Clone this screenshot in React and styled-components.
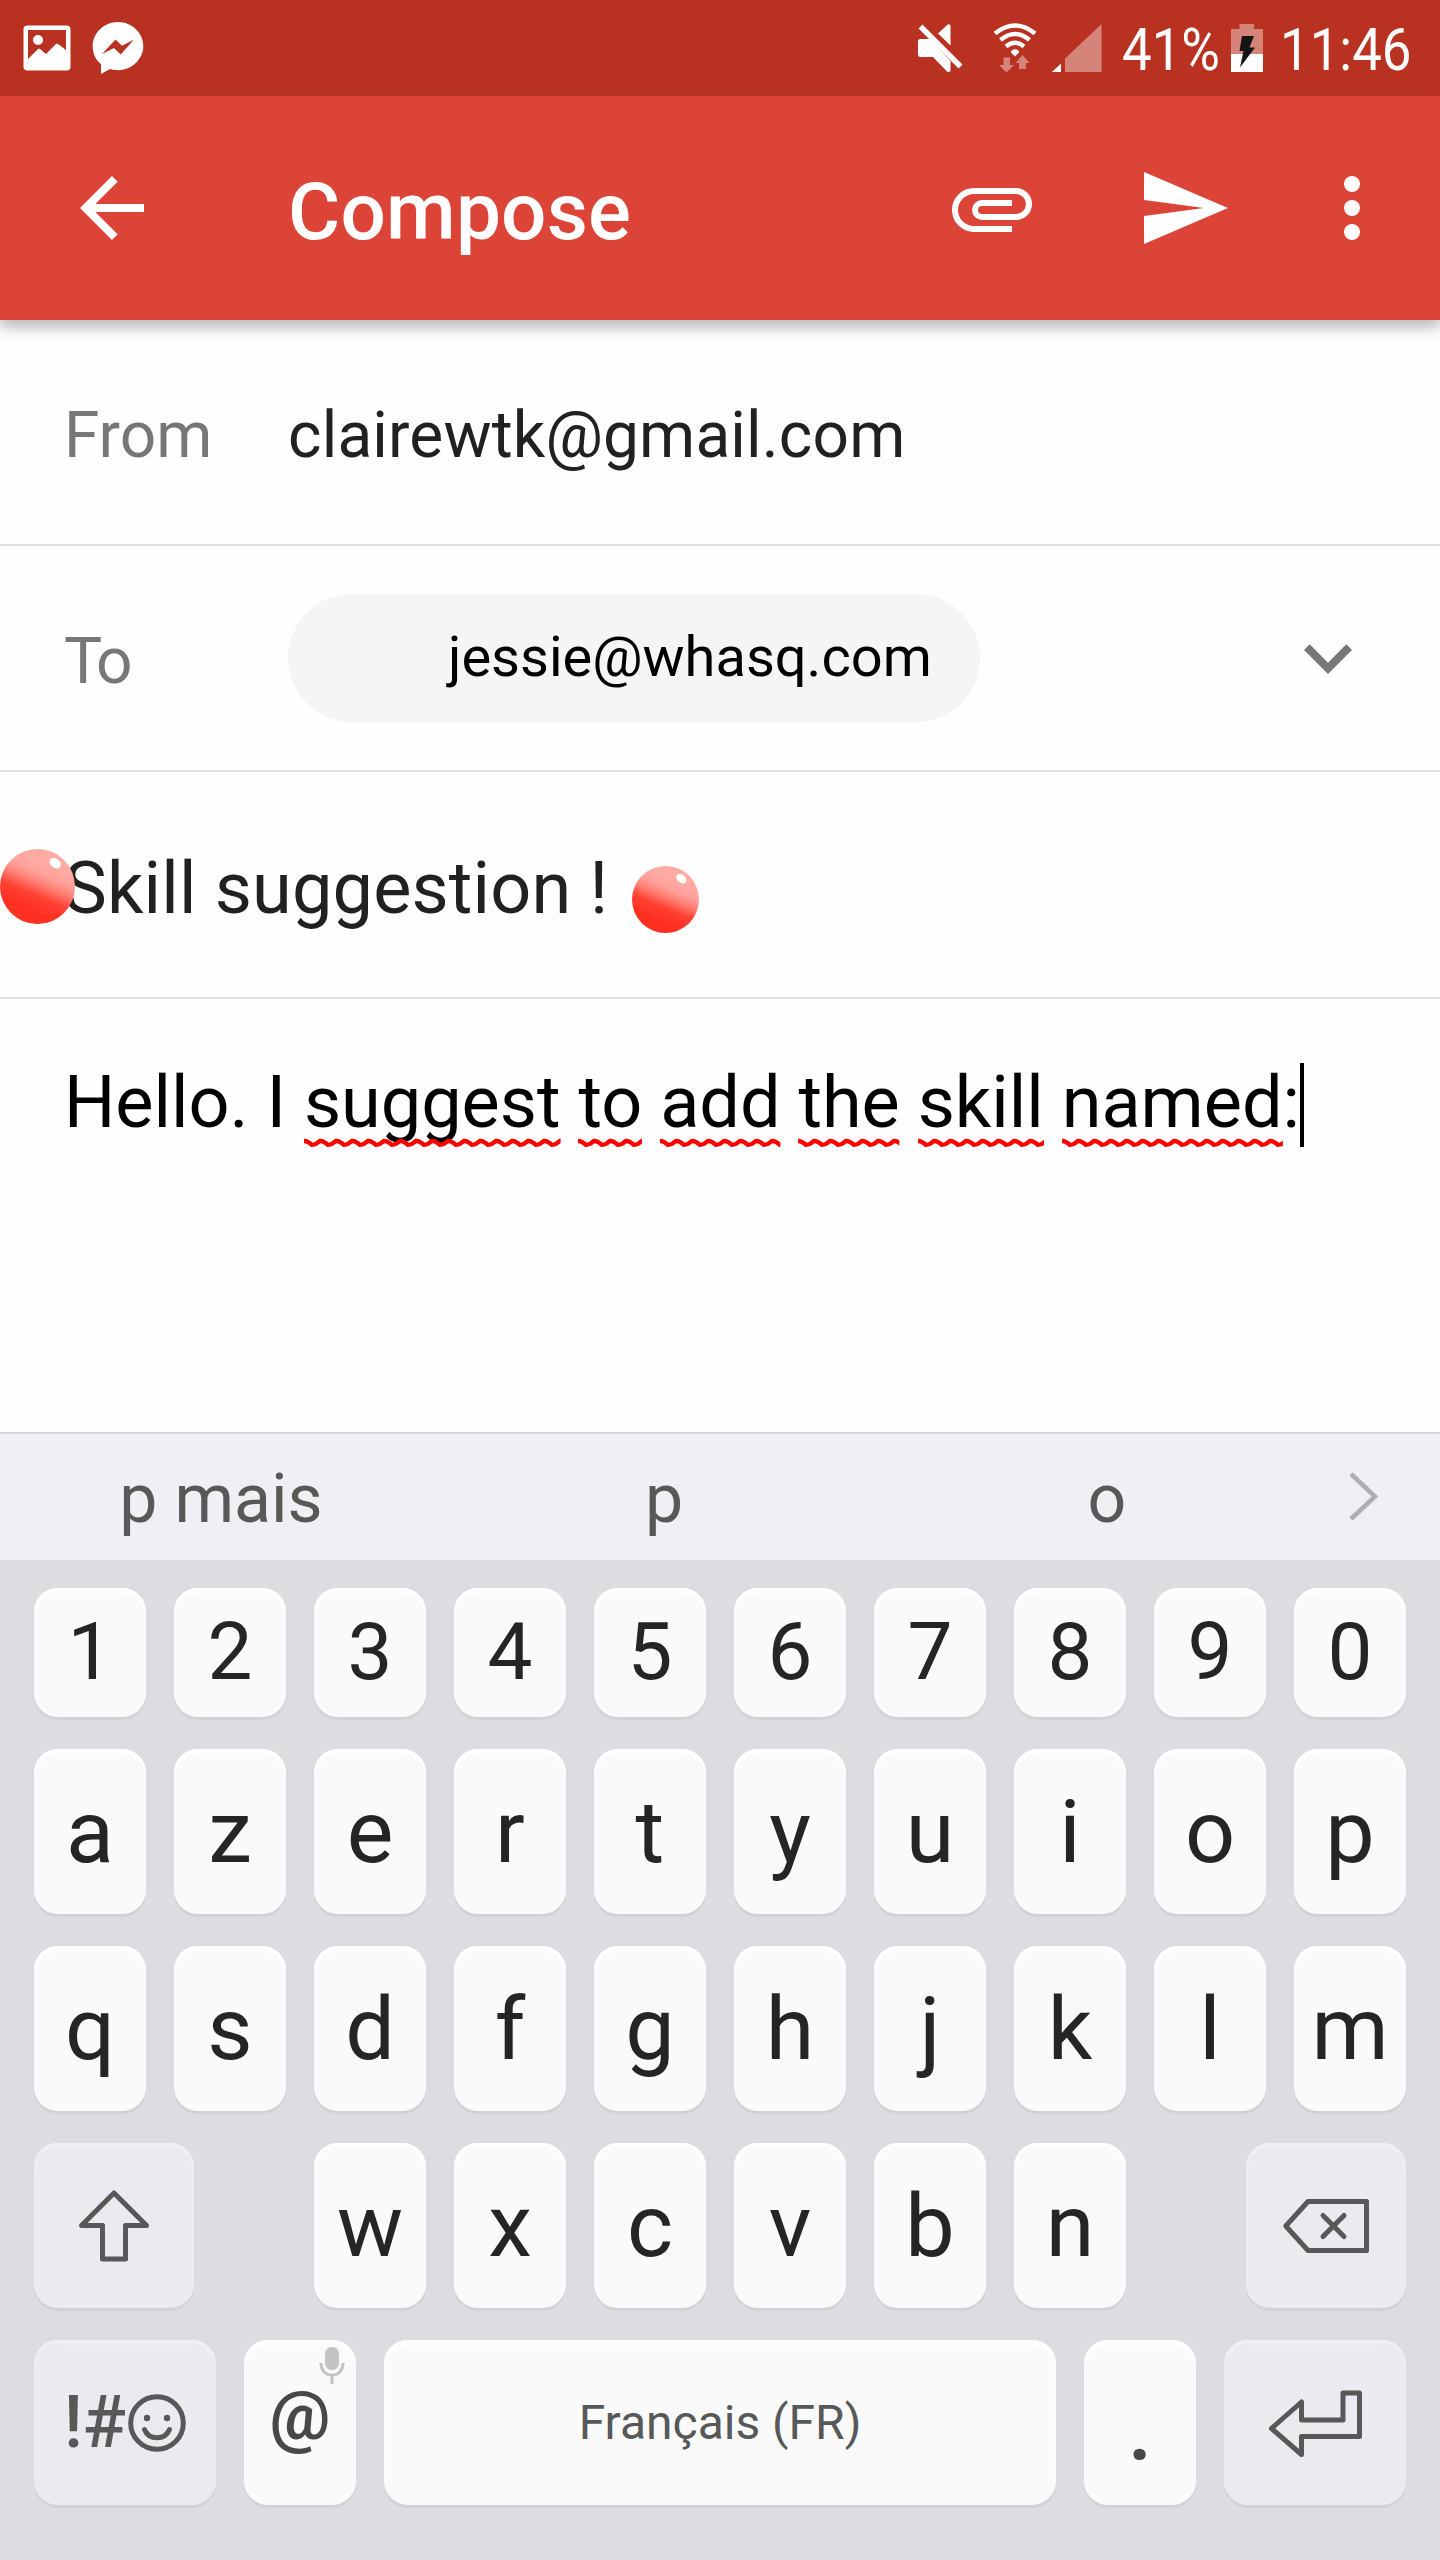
import React from "react";
import styled, { createGlobalStyle } from "styled-components";

const GlobalStyle = createGlobalStyle`
  * { box-sizing: border-box; }
  body { margin: 0; background: #fff; font-family: Roboto, "Liberation Sans", sans-serif; }
  svg { display: block; flex: none; }
`;

const Screen = styled.div`
  width: 1440px;
  height: 2560px;
  display: flex;
  flex-direction: column;
  overflow: hidden;
  background: #fefefe;
`;

const StatusBar = styled.header`
  height: 96px;
  flex: none;
  display: flex;
  align-items: center;
  padding: 0 28px 0 23px;
  background: #b93221;
  color: #fff;
`;

const Spacer = styled.div`
  flex: 1;
`;

const StatusText = styled.span`
  width: ${(p) => p.$width}px;
  margin-left: ${(p) => p.$gap}px;
  padding-top: 4px;
  font-size: 60px;
  line-height: 80px;
  white-space: nowrap;
  transform: scaleX(0.88);
  transform-origin: left center;
`;

const AppBar = styled.nav`
  position: relative;
  z-index: 1;
  height: 224px;
  flex: none;
  display: flex;
  align-items: center;
  padding: 0 40px 0 64px;
  background: #dc4438;
  color: #fff;
  box-shadow: 0 8px 12px rgba(0, 0, 0, 0.26);
`;

const Title = styled.h1`
  flex: 1;
  margin: 0 0 0 128px;
  padding-top: 7px;
  font-size: 80px;
  line-height: 94px;
  font-weight: 500;
  letter-spacing: 0.2px;
`;

const Actions = styled.div`
  display: flex;
`;

const IconBox = styled.div`
  margin-left: ${(p) => p.$gap || 0}px;
`;

const Row = styled.section`
  position: relative;
  height: ${(p) => p.$height}px;
  flex: none;
  display: flex;
  align-items: center;
  padding: 0 64px;
  border-bottom: 2px solid #e0e0e0;
`;

const Label = styled.span`
  width: 224px;
  padding-top: 6px;
  font-size: 64px;
  letter-spacing: ${(p) => p.$tracking || 0}px;
  color: #777;
`;

const Address = styled.span`
  padding-top: 6px;
  font-size: 64px;
  letter-spacing: 0.16px;
  color: #212121;
`;

const Chip = styled.div`
  width: 692px;
  height: 128px;
  display: flex;
  align-items: center;
  padding: 0 0 3px 160px;
  border-radius: 64px;
  background: #f5f5f5;
  font-size: 56px;
  color: #000;
`;

const Subject = styled.span`
  padding-top: 8px;
  font-size: 72px;
  letter-spacing: 0.18px;
  color: #212121;
`;

const LeadBall = styled.div`
  position: absolute;
  left: 0;
  top: 77px;
`;

const TrailBall = styled.div`
  margin: 30px 0 0 24px;
`;

const Body = styled.main`
  flex: 1;
  padding: 62px 64px 0;
  font-size: 72px;
  line-height: 84px;
  color: #000;
  white-space: nowrap;
`;

const Flagged = styled.span`
  position: relative;
  display: inline-block;
`;

const Wave = styled.svg`
  position: absolute;
  left: 0;
  top: 77px;
  width: 100%;
  height: 10px;
  overflow: hidden;
`;

const Caret = styled.span`
  display: inline-block;
  width: 4px;
  height: 84px;
  vertical-align: -20px;
  background: #000;
`;

const Suggestions = styled.div`
  height: 128px;
  flex: none;
  display: flex;
  align-items: center;
  border-top: 2px solid #d6d7d8;
  background: #eff0f3;
  color: #575858;
`;

const Suggestion = styled.span`
  width: 443px;
  padding: 3px 1px 0 0;
  text-align: center;
  font-size: 68px;
`;

const Keyboard = styled.div`
  height: 1000px;
  flex: none;
  display: flex;
  flex-direction: column;
  gap: 32px;
  padding: 27px 34px 0;
  background: #dcdde1;
  border-top: 1px solid #d8dad9;
`;

const KeyRow = styled.div`
  display: flex;
  gap: 28px;
  height: ${(p) => p.$height || 165}px;
`;

const Key = styled.div`
  position: relative;
  width: ${(p) => p.$width || 112}px;
  margin-left: ${(p) => p.$indent || 0}px;
  display: flex;
  align-items: center;
  justify-content: center;
  padding-top: ${(p) => p.$drop || 0}px;
  padding-bottom: ${(p) => p.$lift || 0}px;
  border-radius: 24px;
  background: ${(p) => (p.$fn ? "#e9ebee" : "#fafafa")};
  box-shadow: 0 3px 1px #d1d2d6, inset 0 4px 3px ${(p) => (p.$fn ? "#f0f1f3" : "#fff")};
  font-size: ${(p) => p.$size || 88}px;
  font-weight: ${(p) => p.$weight || 400};
  line-height: 1;
  color: ${(p) => p.$color || "#252525"};
`;

const MicHint = styled.div`
  position: absolute;
  left: 75px;
  top: 6px;
`;

const Ball = ({ size, id }) => (
  <svg width={size} height={size} viewBox="0 0 74 74">
    <defs>
      <linearGradient id={id} x1="0.64" y1="0.18" x2="0.38" y2="0.8">
        <stop offset="0" stopColor="#ffaba4" />
        <stop offset="0.25" stopColor="#ffa19a" />
        <stop offset="0.45" stopColor="#ff7f74" />
        <stop offset="0.7" stopColor="#ff4032" />
        <stop offset="1" stopColor="#ff3022" />
      </linearGradient>
    </defs>
    <circle cx="37" cy="37" r="37" fill={`url(#${id})`} />
    <ellipse cx="54.5" cy="14" rx="6.2" ry="4.4" transform="rotate(38 54.5 14)" fill="#fff" />
  </svg>
);

const Misspelled = ({ children, id }) => (
  <Flagged>
    {children}
    <Wave>
      <defs>
        <pattern id={id} width="16" height="10" patternUnits="userSpaceOnUse">
          <path d="M-8 7 Q-4 7 0 2.800 Q4 2.800 8 7 Q12 7 16 2.800 Q20 2.800 24 7" fill="none" stroke="red" strokeWidth="4.200" />
        </pattern>
      </defs>
      <rect width="100%" height="10" fill={`url(#${id})`} />
    </Wave>
  </Flagged>
);

const WORDS = ["suggest", "to", "add", "the", "skill", "named"];

const Letters = ({ chars, first = 0 }) =>
  chars.split("").map((c, i) => (
    <Key key={c} $indent={i === 0 ? first : 0}>
      {c}
    </Key>
  ));

const line = { fill: "none", stroke: "#575858", strokeWidth: 5, strokeLinejoin: "round", strokeLinecap: "round" };

export default function App() {
  return (
    <Screen>
      <GlobalStyle />
      <StatusBar>
        <svg width="48" height="46" viewBox="0 0 48 46">
          <rect x="0.5" y="0.5" width="47" height="45" rx="4" fill="#fff" />
          <path d="M5 5h38v20l-8-6q-1-1-2 0l-10 10-6-5q-1-1-2 0L5 34z" fill="#b93221" />
          <circle cx="15" cy="15" r="5" fill="#fff" />
        </svg>
        <IconBox $gap={21}>
          <svg width="52" height="54" viewBox="0 0 52 54">
            <path d="M26 1C12 1 .7 12 .7 25c0 8 3.300 14 8.300 18v10l9-5c2.500.8 5 1.200 8 1.200C40 49.200 51.300 38 51.300 25S40 1 26 1z" fill="#fff" />
            <path d="M10 33l13.500-14.500 6.500 6.200 12-6.200-13.300 15-6.700-6.500z" fill="#b93221" />
          </svg>
        </IconBox>
        <Spacer />
        <svg width="46" height="48" viewBox="0 0 46 48">
          <path d="M0 17.500q0-2.500 2.500-2.500H12L32.500 37V46q0 3-3.500 1.500L15 33H2.500Q0 33 0 30.500z" fill="#fff" />
          <path d="M20 9.500L29.500 .8q2.200-1.500 3 1V21.500z" fill="#fff" />
          <path d="M6 -1L48 41" stroke="#b93221" strokeWidth="4" />
          <path d="M2.500 2.500L42.500 42.500" stroke="#fff" strokeWidth="5.500" />
        </svg>
        <IconBox $gap={29}>
          <svg width="44" height="50" viewBox="0 0 44 50">
            <g fill="none" stroke="#fff" strokeWidth="4.400">
              <path d="M2 10.500Q22-5.500 42 10.500" />
              <path d="M7.500 17Q22 5 36.500 17" />
              <path d="M13 23.500Q22 16 31 23.500" />
            </g>
            <path d="M18 28q4-3.300 8 0v1.500L22 33.500l-4-4z" fill="#fff" />
            <path d="M10.500 34.500h6.500v7.500h4l-7.500 7.500-7.500-7.500h4.500zM26 46v-6h-3.500l7-8 7 8H33v6z" fill="#d5847a" />
          </svg>
        </IconBox>
        <IconBox $gap={15}>
          <svg width="50" height="48" viewBox="0 0 50 48">
            <path d="M0 48l9-8.500V48z" fill="#fff" />
            <path d="M13 48V34.500L49.500 0v48z" fill="#d5847a" />
          </svg>
        </IconBox>
        <StatusText $gap={20} $width={100}>41%</StatusText>
        <IconBox $gap={9}>
          <svg width="32" height="48" viewBox="0 0 32 48">
            <path d="M8.500 0H23v5h9v25H0V5h8.500z" fill="#d5847a" />
            <path d="M0 30h32v18H0z" fill="#fff" />
            <path d="M11 12h12l-4.500 11.500H24L9 43.500l3.500-16.500H8.500z" fill="#151515" />
          </svg>
        </IconBox>
        <StatusText $gap={17} $width={132}>11:46</StatusText>
      </StatusBar>

      <AppBar>
        <svg width="96" height="96" viewBox="0 0 24 24" fill="#fff">
          <path d="M20 11H7.830l5.590-5.590L12 4l-8 8 8 8 1.410-1.410L7.830 13H20v-2z" />
        </svg>
        <Title>Compose</Title>
        <Actions>
          <svg width="96" height="96" viewBox="0 0 96 96">
            <path d="M68 69H30a19 19 0 0 1 0-38H72a13 13 0 0 1 0 26H38a7 7 0 0 1 0-14H68" fill="none" stroke="#fff" strokeWidth="6" />
          </svg>
          <IconBox $gap={96}>
            <svg width="96" height="96" viewBox="0 0 24 24" fill="#fff">
              <path d="M2.010 21L23 12 2.010 3 2 10l15 2-15 2z" />
            </svg>
          </IconBox>
          <IconBox $gap={72}>
            <svg width="96" height="96" viewBox="0 0 24 24" fill="#fff">
              <circle cx="12" cy="6" r="2" />
              <circle cx="12" cy="12" r="2" />
              <circle cx="12" cy="18" r="2" />
            </svg>
          </IconBox>
        </Actions>
      </AppBar>

      <Row $height={226}>
        <Label>From</Label>
        <Address>clairewtk@gmail.com</Address>
      </Row>
      <Row $height={226}>
        <Label $tracking={-3}>To</Label>
        <Chip>jessie@whasq.com</Chip>
        <Spacer />
        <svg width="96" height="96" viewBox="0 0 24 24" fill="#777">
          <path d="M16.590 8.590L12 13.170 7.410 8.590 6 10l6 6 6-6z" />
        </svg>
      </Row>
      <Row $height={227}>
        <Subject>Skill suggestion !</Subject>
        <LeadBall>
          <Ball size={75} id="ball-lead" />
        </LeadBall>
        <TrailBall>
          <Ball size={67} id="ball-trail" />
        </TrailBall>
      </Row>
      <Body>
        Hello. I{" "}
        {WORDS.map((w, i) => (
          <React.Fragment key={w}>
            {i > 0 && " "}
            <Misspelled id={`wave-${w}`}>{w}</Misspelled>
          </React.Fragment>
        ))}
        :<Caret />
      </Body>

      <Suggestions>
        <Suggestion>p mais</Suggestion>
        <Suggestion>p</Suggestion>
        <Suggestion>o</Suggestion>
        <IconBox $gap={19}>
          <svg width="32" height="50" viewBox="0 0 32 50">
            <path d="M3 2L27 24.500 3 47" fill="none" stroke="#aeaeaf" strokeWidth="4.500" />
          </svg>
        </IconBox>
      </Suggestions>

      <Keyboard>
        <KeyRow $height={129}>
          {"1234567890".split("").map((n) => (
            <Key key={n} $size={80} $lift={1}>
              {n}
            </Key>
          ))}
        </KeyRow>
        <KeyRow>
          <Letters chars="azertyuiop" />
        </KeyRow>
        <KeyRow>
          <Letters chars="qsdfghjklm" />
        </KeyRow>
        <KeyRow>
          <Key $fn $width={160}>
            <svg width="76" height="76" viewBox="0 0 76 76">
              <path {...line} d="M38 5L5.500 37.500H26.500V71H49.500V37.500H70.500z" />
            </svg>
          </Key>
          <Letters chars="wxcvbn" first={92} />
          <Key $fn $width={160} $indent={92}>
            <svg width="88" height="58" viewBox="0 0 88 58">
              <path {...line} d="M3.800 29L26 4.500H84.500V53.500H26zM41 18.500L62 39.500M62 18.500L41 39.500" />
            </svg>
          </Key>
        </KeyRow>
        <KeyRow>
          <Key $fn $width={182} $size={72} $weight={500} $color="#575858">
            !#
            <svg width="60" height="60" viewBox="0 0 60 60">
              <circle {...line} cx="31" cy="30" r="26.300" />
              <circle cx="21" cy="25" r="3.200" fill="#575858" />
              <circle cx="41" cy="25" r="3.200" fill="#575858" />
              <path {...line} d="M18.500 36.500C23 47.500 39 47.500 43.500 36.500" />
            </svg>
          </Key>
          <Key $size={68} $weight={600} $lift={13} $color="#474848">
            @
            <MicHint>
              <svg width="26" height="40" viewBox="0 0 26 40">
                <rect x="6" y="1" width="14" height="23" rx="6.500" fill="#c3c3c3" />
                <path d="M2 17c0 7 4 12 11 12s11-5 11-12M13 29v9" fill="none" stroke="#c3c3c3" strokeWidth="3" />
              </svg>
            </MicHint>
          </Key>
          <Key $width={672} $size={48} $color="#575858">
            Français (FR)
          </Key>
          <Key $weight={500} $drop={12} $color="#474848">
            .
          </Key>
          <Key $fn $width={182}>
            <svg width="96" height="70" viewBox="0 0 96 70">
              <path {...line} d="M4.500 40.500L34.500 14V32H76V5H92.500V48.500H34.500V66.500z" />
            </svg>
          </Key>
        </KeyRow>
      </Keyboard>
    </Screen>
  );
}
